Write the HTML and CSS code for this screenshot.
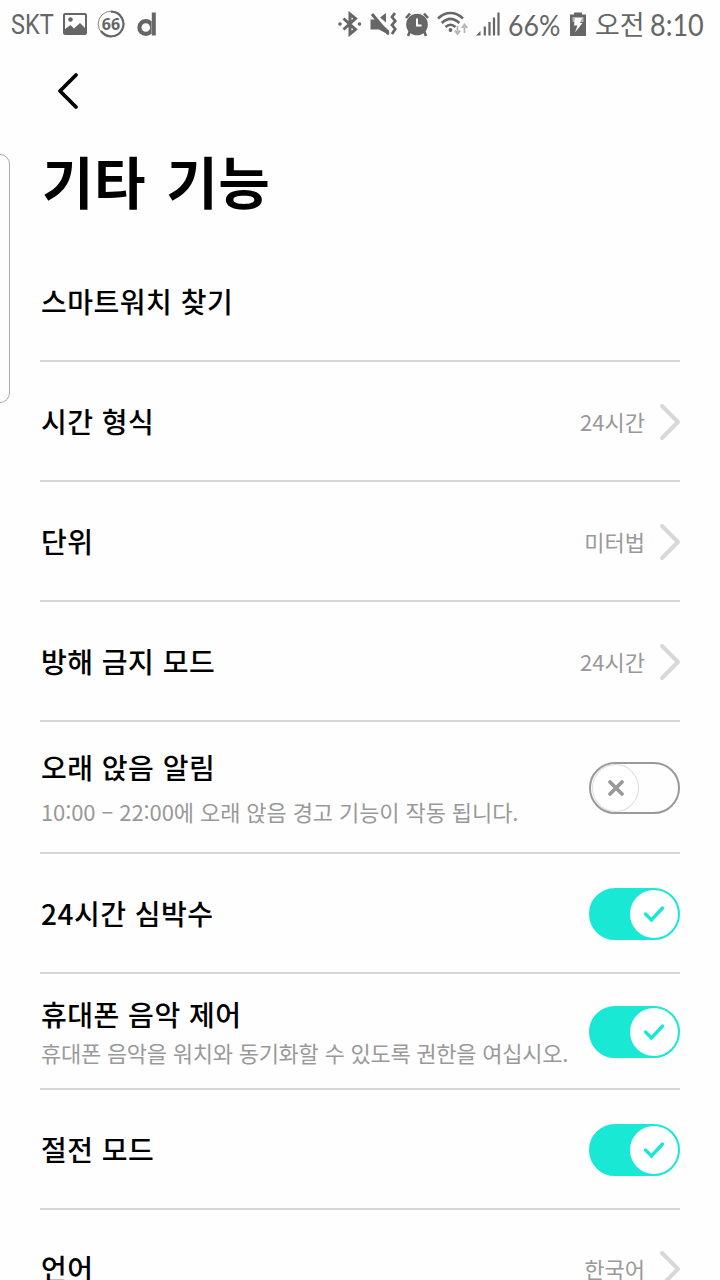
FILE: index.html
```html
<!DOCTYPE html>
<html lang="ko">
<head>
    <meta charset="UTF-8">
    <meta name="viewport" content="width=device-width, initial-scale=1.0">
    <title>기타 기능</title>
    <link rel="stylesheet" href="styles.css">
</head>
<body>

<svg class="symbols" width="0" height="0">
    <symbol id="arrow" viewBox="0 0 22 40">
        <path d="M3 5L19 21L3 37" fill="none" stroke="#d8d8d8" stroke-width="4" stroke-linecap="round" stroke-linejoin="round"/>
    </symbol>
    <symbol id="check" viewBox="0 0 24 20">
        <path d="M3.500 10L9.500 16L20.500 4" fill="none" stroke="#19e8d5" stroke-width="3.400" stroke-linecap="round"/>
    </symbol>
</svg>

<div class="screen">
    <div class="status-bar">
        <div class="status-left">
            <span class="carrier"><span>SKT</span></span>
            <svg class="icon-picture" width="24" height="24" viewBox="0 0 24 24">
                <rect x="1" y="2" width="22" height="20" rx="1" fill="none" stroke="#666" stroke-width="2"/>
                <circle cx="7.500" cy="7.500" r="2.300" fill="#666"/>
                <path d="M2 22V17L7.500 13L11 16.500L17 11L22 16V22Z" fill="#666"/>
            </svg>
            <span class="gauge">
                <svg width="28" height="30" viewBox="0 0 28 30">
                    <circle cx="14" cy="15" r="12.800" fill="none" stroke="#888" stroke-width="1"/>
                    <path d="M14 2.700A12.300 12.300 0 1 1 4 22" fill="none" stroke="#666" stroke-width="2.200"/>
                </svg>
                <span class="gauge-text">66</span>
            </span>
            <svg class="icon-d" width="20" height="24" viewBox="0 0 20 24">
                <circle cx="8.800" cy="15.500" r="6.400" fill="none" stroke="#666" stroke-width="4.200"/>
                <path d="M16.800 0.500V23.500" stroke="#666" stroke-width="4"/>
                <path d="M14.600 10V21" stroke="#aaa" stroke-width="0.800"/>
            </svg>
        </div>
        <div class="status-right">
            <svg width="24" height="26" viewBox="0 0 24 26">
                <path d="M5.500 7.500L17.500 18.500L12 23V3L17.500 7.500L5.500 18.500" fill="none" stroke="#666" stroke-width="3"/>
                <circle cx="2" cy="13" r="1.800" fill="#666"/>
                <circle cx="21.500" cy="13" r="1.800" fill="#666"/>
            </svg>
            <svg width="27" height="26" viewBox="0 0 27 26">
                <path d="M0.500 8.500H6L19 19.500V24L9 18.500H0.500Z" fill="#666"/>
                <path d="M10 6.500L16 2V11.500Z" fill="#666"/>
                <path d="M2 3L18.500 23" stroke="#666" stroke-width="3"/>
                <path d="M25 2L22 6L25.200 10L22 14L25.200 18L22 23" fill="none" stroke="#666" stroke-width="2.800"/>
            </svg>
            <svg width="24" height="26" viewBox="0 0 24 26">
                <circle cx="12" cy="13.500" r="10.800" fill="#666"/>
                <path d="M1 7L5 2.500M23 7L19 2.500M5 20L3 25M19 20L21 25" stroke="#666" stroke-width="2.600"/>
                <path d="M12 7.500V14.500H16.500" fill="none" stroke="#fff" stroke-width="2"/>
            </svg>
            <svg width="31" height="26" viewBox="0 0 31 26">
                <path d="M1 7.500C8.500 0 18.500 0 26 7.500M4.800 12C10.500 6.500 16.500 6.500 22.300 12M8.500 16C12 12.800 15 12.800 18.500 16" fill="none" stroke="#666" stroke-width="2.500"/>
                <circle cx="13.500" cy="19" r="1.900" fill="#666"/>
                <path d="M20.500 15V22M17.800 19.500L20.500 23L23.200 19.500M27.500 22V15.500M24.800 17L27.500 13.500L30.200 17" fill="none" stroke="#b5b5b5" stroke-width="1.800"/>
            </svg>
            <svg width="24" height="26" viewBox="0 0 24 26">
                <path d="M0 24.500L4.500 20V24.500Z" fill="#666"/>
                <path d="M8.800 24.500V15.500M13.500 24.500V11M18 24.500V6.500M22.500 24.500V1.500" stroke="#666" stroke-width="2.200"/>
            </svg>
            <span class="percent"><span>66%</span></span>
            <svg width="18" height="26" viewBox="0 0 18 26">
                <path d="M1 3.500H5V1.500H13V3.500H17V25H1Z" fill="#666"/>
                <path d="M3.500 6H14.500V11H3.500Z" fill="#b5b5b5"/>
                <path d="M6 7H13L11 12H13.500L6 21.500L8.500 14.500H5Z" fill="#fff"/>
            </svg>
            <span class="ampm">오전</span>
            <span class="clock"><span>8:10</span></span>
        </div>
    </div>

    <div class="edge-handle"></div>

    <div class="nav">
        <svg width="24" height="40" viewBox="0 0 24 40">
            <path d="M20 4L4 20L20 36" fill="none" stroke="#000" stroke-width="3.800" stroke-linecap="round" stroke-linejoin="round"/>
        </svg>
    </div>

    <h1>기타 기능</h1>

    <div class="list">
        <div class="row">
            <div class="label">스마트워치 찾기</div>
        </div>
        <div class="row">
            <div class="label">시간 형식</div>
            <div class="value">24시간</div>
            <svg class="arrow"><use href="#arrow"/></svg>
        </div>
        <div class="row">
            <div class="label">단위</div>
            <div class="value">미터법</div>
            <svg class="arrow"><use href="#arrow"/></svg>
        </div>
        <div class="row">
            <div class="label">방해 금지 모드</div>
            <div class="value">24시간</div>
            <svg class="arrow"><use href="#arrow"/></svg>
        </div>
        <div class="row row-sedentary">
            <div class="text">
                <div class="label">오래 앉음 알림</div>
                <div class="desc">10:00 – 22:00에 오래 앉음 경고 기능이 작동 됩니다.</div>
            </div>
            <div class="switch">
                <div class="knob">
                    <svg width="20" height="20" viewBox="0 0 20 20">
                        <path d="M4 4L16 16M16 4L4 16" stroke="#999" stroke-width="3.800" stroke-linecap="round"/>
                    </svg>
                </div>
            </div>
        </div>
        <div class="row">
            <div class="label">24시간 심박수</div>
            <div class="switch on">
                <div class="knob"><svg class="check"><use href="#check"/></svg></div>
            </div>
        </div>
        <div class="row row-music">
            <div class="text">
                <div class="label">휴대폰 음악 제어</div>
                <div class="desc">휴대폰 음악을 워치와 동기화할 수 있도록 권한을 여십시오.</div>
            </div>
            <div class="switch on">
                <div class="knob"><svg class="check"><use href="#check"/></svg></div>
            </div>
        </div>
        <div class="row">
            <div class="label">절전 모드</div>
            <div class="switch on">
                <div class="knob"><svg class="check"><use href="#check"/></svg></div>
            </div>
        </div>
        <div class="row row-language">
            <div class="label">언어</div>
            <div class="value">한국어</div>
            <svg class="arrow"><use href="#arrow"/></svg>
        </div>
    </div>
</div>

</body>
</html>
```
FILE: styles.css
```css
* {
    box-sizing: border-box;
}
body {
    margin: 0;
    background-color: #fefefe;
    font-family: "Noto Sans CJK KR", sans-serif;
    color: #000;
}
svg {
    display: block;
    flex-shrink: 0;
}
.symbols {
    position: absolute;
}
.screen {
    position: relative;
    height: 1280px;
    overflow: hidden;
}
.status-bar {
    display: flex;
    justify-content: space-between;
    height: 48px;
    padding: 0 16px 0 11px;
    color: #666;
    white-space: nowrap;
}
.status-left, .status-right {
    display: flex;
    align-items: center;
}
.status-right {
    gap: 8px;
}
.carrier {
    width: 43px;
    margin-right: 9px;
    font-family: Roboto, sans-serif;
    font-size: 28px;
}
.carrier span, .percent span, .clock span {
    display: inline-block;
    transform-origin: left center;
}
.carrier span {
    transform: scaleX(0.84);
}
.gauge {
    position: relative;
    margin: 0 12px 0 10px;
}
.gauge-text {
    position: absolute;
    inset: 0;
    text-align: center;
    font: bold 16px/30px "Open Sans", sans-serif;
}
.percent {
    width: 53px;
    font-family: Lato, sans-serif;
    font-size: 29px;
}
.percent span {
    transform: scaleX(0.92);
}
.ampm {
    width: 47px;
    font-size: 27px;
    line-height: 48px;
}
.clock {
    width: 54px;
    font-family: Lato, sans-serif;
    font-size: 30px;
}
.clock span {
    transform: scaleX(0.9);
}
.edge-handle {
    position: absolute;
    left: -12px;
    top: 154px;
    width: 22px;
    height: 249px;
    border: 1px solid #aaa;
    border-radius: 10px;
}
.nav {
    padding: 23px 0 0 56px;
}
h1 {
    margin: 29px 0 0 42px;
    height: 102px;
    font-size: 56px;
    font-weight: 700;
    line-height: 80px;
    word-spacing: 4px;
    letter-spacing: 0.5px;
}
.list {
    padding: 0 40px;
}
.row {
    display: flex;
    align-items: center;
    height: 120px;
    border-bottom: 2px solid #d6d6d6;
}
.row-sedentary {
    height: 132px;
}
.row-music {
    height: 116px;
}
.row-language {
    height: 118px;
}
.label {
    flex: 1;
    padding-left: 1px;
    font-size: 28px;
    font-weight: 500;
    line-height: 42px;
    letter-spacing: 0.5px;
    white-space: nowrap;
}
.text {
    flex: 1;
    min-width: 0;
}
.desc {
    margin-top: 6px;
    padding-left: 1px;
    color: #999;
    font-size: 22px;
    line-height: 34px;
    letter-spacing: -0.1px;
    white-space: nowrap;
}
.row-music .desc {
    margin-top: 0;
    letter-spacing: -0.25px;
}
.value {
    margin-right: 14px;
    color: #999;
    font-size: 22px;
}
.arrow {
    width: 22px;
    height: 40px;
    margin-right: -1px;
}
.switch {
    display: flex;
    width: 91px;
    height: 52px;
    margin-top: 2px;
    padding: 0 1px;
    border: 2px solid #999;
    border-radius: 26px;
}
.knob {
    display: flex;
    align-items: center;
    justify-content: center;
    width: 47px;
    height: 48px;
    border: 1px solid #ddd;
    border-radius: 50%;
    background-color: #fff;
}
.switch.on {
    justify-content: flex-end;
    padding: 0;
    border-color: #19e8d5;
    background-color: #19e8d5;
}
.on .knob {
    width: 48px;
    border: none;
}
.check {
    width: 24px;
    height: 20px;
}
```
